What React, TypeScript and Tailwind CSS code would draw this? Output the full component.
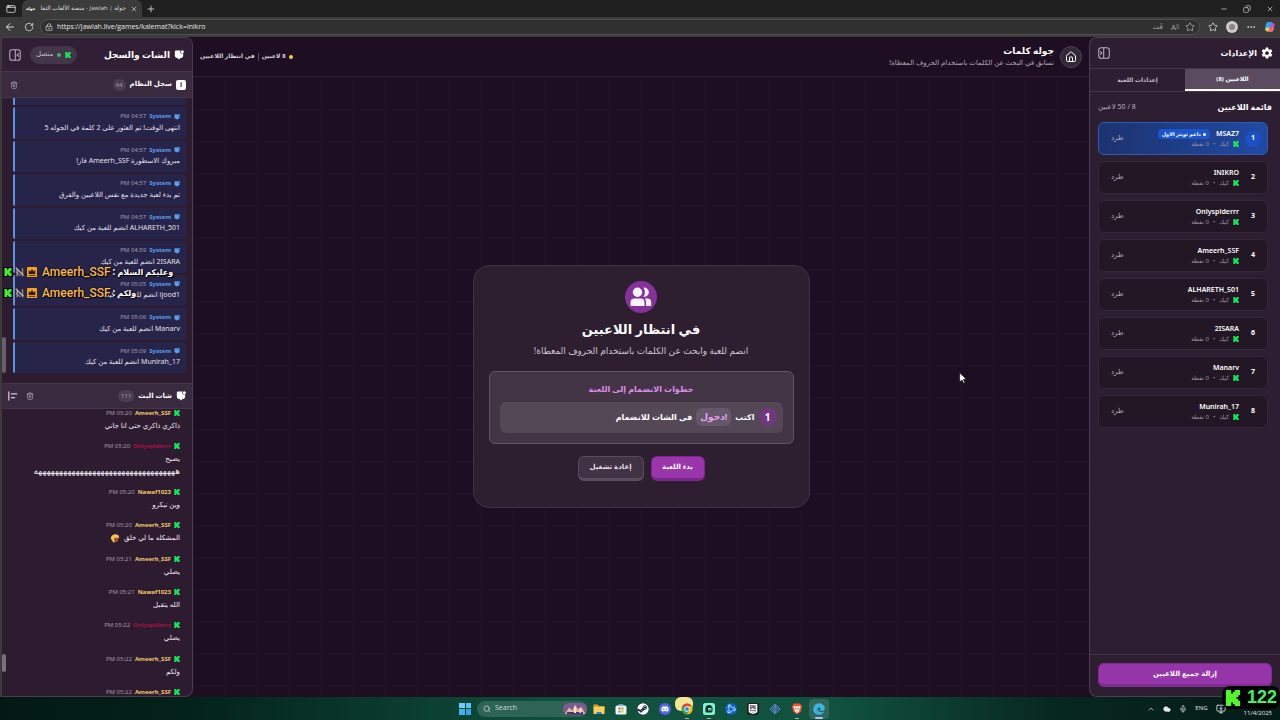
import type { ReactNode } from "react";
import {
  ArrowLeft, RotateCw, LockKeyhole, X, Plus, Minus, Copy, Star, Ellipsis, Trash2,
  Search, ChevronUp, Cloud, Mic, House, MonitorDown, AppWindow,
} from "lucide-react";
import { IoSettingsSharp } from "react-icons/io5";
import { FaSteam, FaDiscord, FaEdge } from "react-icons/fa";
import { SiEpicgames, SiBattledotnet } from "react-icons/si";

const KickIcon = ({ className = "size-1.5 text-[#12e85a]" }: { className?: string }) => (
  <svg viewBox="1 0 22 24" fill="currentColor" className={`shrink-0 ${className}`} aria-hidden="true">
    <path d="M1.333 0h8v5.333H12V2.667h2.667V0h8v8H20v2.667h-2.667v2.666H20V16h2.667v8h-8v-2.667H12v-2.666H9.333V24h-8Z" />
  </svg>
);

const ChatIcon = ({ className = "" }: { className?: string }) => (
  <svg viewBox="0 0 24 24" className={`shrink-0 ${className}`} aria-hidden="true">
    <path fill="currentColor" d="M5 1h11a4.200 4.200 0 0 0 6 6V14a5 5 0 0 1-5 5h-1.500L12 23l-3.500-4H7a5 5 0 0 1-5-5V4a3 3 0 0 1 3-3Z" />
    <circle cx="20" cy="4" r="3.600" fill="currentColor" />
  </svg>
);

const PanelIcon = ({ flip = false }: { flip?: boolean }) => (
  <svg viewBox="0 0 24 24" fill="none" stroke="currentColor" strokeWidth="1.800" strokeLinecap="round" className={flip ? "size-3.5 -scale-x-100" : "size-3.5"} aria-hidden="true">
    <path d="M7 3h10a4 4 0 0 1 4 4v10a4 4 0 0 1-4 4H7a4 4 0 0 1-4-4V7a4 4 0 0 1 4-4ZM12.500 3v18M18 9.500 15.500 12l2.500 2.500" />
  </svg>
);

const UsersIcon = () => (
  <svg viewBox="0 0 24 24" fill="#fbf4fc" className="size-6" aria-hidden="true">
    <circle cx="8.500" cy="7.200" r="4.700" />
    <path d="M14.300 2.700a4.600 4.600 0 1 1 0 9 7 7 0 0 0 0-9Z" />
    <path d="M5.500 13.500h6a4 4 0 0 1 4 4v3.500h-14v-3.500a4 4 0 0 1 4-4Z" />
    <path d="M15.800 13.500h2.400a4 4 0 0 1 4 4v3.500h-5.100v-3.700a5.500 5.500 0 0 0-1.300-3.800Z" />
  </svg>
);

const BroadcastMark = () => (
  <svg viewBox="0 0 24 24" className="size-2.5 shrink-0" aria-hidden="true">
    <path d="M5 22V4l13 16V3" stroke="#8e8878" strokeWidth="3.500" fill="none" />
    <path d="m2 3 19 16M4 12l8 9" stroke="#d6d0c0" strokeWidth="2" strokeLinecap="round" />
  </svg>
);

const CrownBadge = () => (
  <svg viewBox="0 0 24 24" className="size-2.5 shrink-0" aria-hidden="true">
    <rect width="24" height="24" rx="2" fill="#f6a11c" />
    <path d="m4 7 4 4 4-6 4 6 4-4v10H4Z" fill="#2d1c10" />
    <path d="M4 19h16v2H4z" fill="#2d1c10" />
  </svg>
);

type LogEntry = { time: string; text: string };
const logs: LogEntry[] = [
  { time: "04:57", text: "انتهى الوقت! تم العثور على 2 كلمة في الجوله 5" },
  { time: "04:57", text: "مبروك الاسطورة Ameerh_SSF فاز!" },
  { time: "04:57", text: "تم بدء لعبة جديدة مع نفس اللاعبين والفرق" },
  { time: "04:57", text: "ALHARETH_501 انضم للعبة من كيك" },
  { time: "04:59", text: "2ISARA انضم للعبة من كيك" },
  { time: "05:05", text: "ijood1 انضم للعبة من كيك" },
  { time: "05:06", text: "Manarv انضم للعبة من كيك" },
  { time: "05:09", text: "Munirah_17 انضم للعبة من كيك" },
];

type ChatEntry = { name: string; time: string; text?: string; laugh?: string; red?: boolean; emote?: boolean };
const chat: ChatEntry[] = [
  { name: "Ameerh_SSF", time: "05:20", text: "ذاكري ذاكري حتى انا جاني" },
  { name: "Onlyspiderrr", time: "05:20", text: "يصيح", laugh: "ههههههههههههههههههههههههههههههههههه", red: true },
  { name: "Nawaf1023", time: "05:20", text: "وين نيكرو" },
  { name: "Ameerh_SSF", time: "05:20", text: "المشكله ما لي خلق", emote: true },
  { name: "Ameerh_SSF", time: "05:21", text: "يصلي" },
  { name: "Nawaf1023", time: "05:21", text: "الله يتقبل" },
  { name: "Onlyspiderrr", time: "05:22", text: "يصلي", red: true },
  { name: "Ameerh_SSF", time: "05:22", text: "ولكم" },
  { name: "Ameerh_SSF", time: "05:22" },
];

const players = ["MSAZ7", "INIKRO", "Onlyspiderrr", "Ameerh_SSF", "ALHARETH_501", "2ISARA", "Manarv", "Munirah_17"];

function BrowserChrome() {
  return (
    <header className="shrink-0 bg-[#1f1f1f] font-['Open_Sans','DejaVu_Sans',sans-serif] text-[#d9d9d9]">
      <div className="flex h-[17px] items-center">
        <AppWindow className="ml-1.5 size-2.5" />
        <div className="ml-1.5 flex h-full w-[120px] items-center gap-1 rounded-t-md bg-[#3b3b3b] px-1">
          <span className="text-[4px] font-bold text-white">جولة</span>
          <span dir="rtl" className="flex-1 text-[6px] whitespace-nowrap">جولة | Jawlah - منصة الألعاب التفا</span>
          <button aria-label="Close tab"><X className="size-2" /></button>
        </div>
        <button aria-label="New tab" className="ml-1"><Plus className="size-2.5" /></button>
        <div className="ml-auto flex items-center gap-[15px] pr-1.5">
          <button aria-label="Minimize"><Minus className="size-2" /></button>
          <button aria-label="Restore"><Copy className="size-2 -scale-x-100" /></button>
          <button aria-label="Close"><X className="size-2" /></button>
        </div>
      </div>
      <div className="flex h-5 items-center gap-2 bg-[#3b3b3b] px-1">
        <button aria-label="Back"><ArrowLeft className="size-3" /></button>
        <button aria-label="Reload"><RotateCw className="size-2.5" /></button>
        <div className="-ml-0.5 flex h-4 flex-1 items-center gap-1 rounded-full border border-[#505050] bg-[#303030] px-1">
          <LockKeyhole className="size-2" />
          <input aria-label="Address" readOnly value="https://jawlah.live/games/kalemat?kick=inikro" className="min-w-0 flex-1 bg-transparent text-[7px] text-[#e6e6e6] outline-none" />
          <span className="mr-1 text-[7px] text-[#a8a8a8]">قَت</span>
          <span className="mr-0.5 text-[8px] text-[#a8a8a8]">A<sup className="text-[5px]">))</sup></span>
          <Star className="size-2.5 text-[#a8a8a8]" />
        </div>
        <Star className="size-2.5" />
        <span className="grid size-3 place-items-center rounded-full bg-[#cfcac9]"><span className="size-1.5 rounded-full bg-[#8d8583]" /></span>
        <Ellipsis className="size-2.5" />
        <svg viewBox="0 0 24 24" className="size-3" aria-hidden="true">
          <path d="M8 2h8l-5 18H6a4 4 0 0 1-4-5l2-9a5 5 0 0 1 4-4Z" fill="#2aa7f0" />
          <path d="M4 13h9l-2 8H7a4 4 0 0 1-4-5Z" fill="#e5cf3e" />
          <path d="M14 4h3a4 4 0 0 1 4 5l-2 9a5 5 0 0 1-4 4H9Z" fill="#c253d8" />
          <path d="M16 12h4l-1 6a5 5 0 0 1-4 4H9l4-5Z" fill="#f2665d" />
        </svg>
      </div>
    </header>
  );
}

function CountPill({ children }: { children: ReactNode }) {
  return <span className="rounded-full bg-[#4c3e51] px-[3px] text-[6px] leading-3 text-[#a499a8]">{children}</span>;
}

function ChatPanel() {
  return (
    <aside dir="rtl" className="flex w-[191px] shrink-0 flex-col overflow-hidden rounded-r-lg border border-l-0 border-[#4b3c50] bg-[#2d1c30]">
      <div className="flex h-[33px] shrink-0 items-center gap-1 bg-[#312035] pr-2 pl-1.5">
        <ChatIcon className="size-2.5 text-white" />
        <h2 className="text-[9px] font-bold text-white">الشات والسجل</h2>
        <span className="mr-auto ml-1 flex h-[18px] items-center gap-1 rounded-full bg-[#44364a] px-1.5 text-[7px] text-[#c6bdc9]">
          <KickIcon /><span className="size-1 rounded-full bg-[#3fb56a]" />متصل
        </span>
        <button aria-label="طي اللوحة" className="text-[#b9afbd]"><PanelIcon /></button>
      </div>
      <div className="flex h-[27px] shrink-0 items-center gap-1 border-y border-[#463749] bg-[#3a2a3f] pr-1.5 pl-2">
        <span className="grid size-2.5 place-items-center rounded-xs bg-white text-[7px] leading-none font-bold text-[#3a2a3f]">i</span>
        <h3 className="text-[7px] font-bold text-white">سجل النظام</h3>
        <CountPill>64</CountPill>
        <button aria-label="مسح السجل" className="mr-auto text-[#b9afbd]"><Trash2 className="size-2" /></button>
      </div>
      <div className="flex h-[285px] shrink-0 pb-2.5">
        <ul className="flex flex-1 flex-col gap-0.5 pr-1.5">
          <li className="h-[7px] border-l-2 border-[#5795e0] bg-[#27244a]" />
          {logs.map((l) => (
            <li key={l.text} className="flex flex-1 flex-col justify-center rounded-xs border-l-2 border-[#5795e0] bg-[#27244a] pr-1.5 whitespace-nowrap">
              <div className="flex h-2.5 items-center gap-[3px] text-[6px]">
                <ChatIcon className="size-1.5 text-[#5ba0ee]" />
                <b className="text-[#5ba0ee]">System</b>
                <time className="text-[#a09ab0]">{l.time} PM</time>
              </div>
              <p className="text-[7px] leading-3 text-[#e3e0ea]">{l.text}</p>
            </li>
          ))}
        </ul>
        <div className="flex w-[11px] flex-col items-end justify-end"><span className="h-9 w-1 rounded-full bg-[#6a5d6e]" /></div>
      </div>
      <div className="flex h-[26px] shrink-0 items-center gap-1 border-y border-[#463749] bg-[#3a2a3f] px-1.5">
        <ChatIcon className="size-2.5 text-white" />
        <h3 className="text-[7px] font-bold text-white">شات البث</h3>
        <CountPill>111</CountPill>
        <button aria-label="مسح الشات" className="mr-auto text-[#b9afbd]"><Trash2 className="size-2" /></button>
        <button aria-label="محاذاة" className="mr-1 text-[#d5ccd8]">
          <svg viewBox="0 0 24 24" className="size-2.5" stroke="currentColor" strokeWidth="3" aria-hidden="true"><path d="M2 1v22M7 7h15M7 16h10" /></svg>
        </button>
      </div>
      <div className="flex min-h-0 flex-1">
        <ul className="flex flex-1 flex-col justify-between pr-3">
          {chat.map((c, i) => (
            <li key={i} className="whitespace-nowrap">
              <div className="flex h-2 items-center gap-[3px] text-[6px] leading-2">
                <KickIcon />
                <b className={c.red ? "text-[#a5103f]" : "text-[#f5c86c]"}>{c.name}</b>
                <time className="text-[#a297a6]">{c.time} PM</time>
              </div>
              {c.text && (
                <p className="mt-[3px] flex items-center gap-1 text-[7px] leading-3 text-[#f0eaf2]">
                  {c.text}
                  {c.emote && (
                    <svg viewBox="0 0 24 24" className="size-2.5" aria-hidden="true">
                      <path d="M2 14C1 4 14-1 22 7l-2 7-6-3-4 6 5 4-7 2Z" fill="#f1c34a" />
                      <path d="M10 12h11l-3 9h-7Z" fill="#a64a28" />
                    </svg>
                  )}
                </p>
              )}
              {c.laugh && <p className="text-[9px] leading-3 text-[#f0eaf2]">{c.laugh}</p>}
            </li>
          ))}
        </ul>
        <div className="flex w-3 flex-col items-end justify-end pb-6"><span className="h-[18px] w-1 rounded-full bg-[#7b6f7f]" /></div>
      </div>
    </aside>
  );
}

function GameArea() {
  return (
    <main dir="rtl" className="flex min-w-0 flex-1 flex-col bg-[#1e0e21]">
      <div className="flex h-10 shrink-0 items-center border-b border-[#2c1b2f] px-[7px]">
        <a href="#home" aria-label="الرئيسية" className="grid size-[22px] place-items-center rounded-full border border-[#4e3f52] bg-[#35263a] text-white"><House className="size-3" /></a>
        <div className="mr-1.5">
          <h1 className="text-[9px] leading-3 font-bold text-white">جوله كلمات</h1>
          <p className="text-[7px] leading-3 text-[#b3a8b7]">تسابق في البحث عن الكلمات باستخدام الحروف المعطاة!</p>
        </div>
        <div className="mr-auto flex items-center gap-[3px] text-[6px] font-bold text-[#d8cfdb]">
          <span className="size-1 rounded-full bg-[#f5d52c]" />
          <span>8 لاعبين</span>
          <span className="h-2 w-px bg-[#5d4f61]" />
          <span>في انتظار اللاعبين</span>
        </div>
      </div>
      <div className="grid flex-1 place-items-center bg-[linear-gradient(to_right,#231128_1px,transparent_1px),linear-gradient(to_bottom,#231128_1px,transparent_1px)] bg-size-[32px_32px] pb-0.5">
        <section className="flex w-[337px] flex-col items-center rounded-2xl border border-[#423245] bg-[#2d1e30] px-[15px] pt-[15px] pb-[26px]">
          <div className="grid size-8 place-items-center rounded-full bg-[#86309a]"><UsersIcon /></div>
          <h2 className="mt-1 text-[13px] leading-6 font-bold text-white">في انتظار اللاعبين</h2>
          <p className="mt-0.5 text-[9px] leading-4 text-[#cdc5d0]">انضم للعبة وابحث عن الكلمات باستخدام الحروف المعطاة!</p>
          <div className="mt-3 w-full rounded-md border border-[#615364] bg-[#433446] p-2.5">
            <h3 className="text-center text-[8px] leading-[14px] font-bold text-[#dc8eea]">خطوات الانضمام إلى اللعبة</h3>
            <div className="mt-1.5 flex h-[31px] items-center gap-1 rounded-md bg-[#544857] px-1.5 text-[8px] font-bold text-white">
              <span className="grid size-[18px] place-items-center rounded-full bg-[#71377f] text-[10px]">1</span>
              اكتب
              <code className="rounded-md bg-[#65586a] px-1 font-['Noto_Sans','DejaVu_Sans',sans-serif] text-[9px] leading-[18px] font-bold text-[#e6a3f1]">!دخول</code>
              في الشات للانضمام
            </div>
          </div>
          <div className="mt-3 flex gap-[7px]">
            <button className="h-[25px] w-[54px] rounded-md border border-b-3 border-[#79278b] bg-[#9a35ac] text-[7px] font-bold text-white">بدء اللعبة</button>
            <button className="h-[25px] w-[66px] rounded-md border border-b-3 border-[#5a4b5e] bg-[#413244] text-[7px] font-bold text-[#e6dfe8]">إعادة تشغيل</button>
          </div>
        </section>
      </div>
    </main>
  );
}

function PlayersPanel() {
  return (
    <aside dir="rtl" className="flex w-[191px] shrink-0 flex-col rounded-l-lg border border-r-0 border-[#4b3c50] bg-[#2e1e31]">
      <div className="flex h-[30px] shrink-0 items-center gap-1 px-[7px]">
        <IoSettingsSharp className="size-3 text-white" />
        <h2 className="text-[8px] font-bold text-white">الإعدادات</h2>
        <button aria-label="طي الإعدادات" className="mr-auto text-[#b9afbd]"><PanelIcon flip /></button>
      </div>
      <div className="flex h-6 shrink-0 border-y border-[#463749] text-[6px] font-bold">
        <button className="flex-1 border-b-2 border-white bg-[#5a4c5e] text-white">اللاعبين (8)</button>
        <button className="flex-1 text-[#c3bac6]">إعدادات اللعبة</button>
      </div>
      <div className="flex h-[30px] shrink-0 items-center justify-between px-2">
        <h3 className="text-[8px] font-bold text-white">قائمة اللاعبين</h3>
        <span className="text-[7px] text-[#b9afbd]">8 / 50 لاعبين</span>
      </div>
      <ol className="flex flex-col gap-1.5 pr-3 pl-2">
        {players.map((name, i) => (
          <li key={name} className={i === 0
            ? "flex h-[33px] items-center rounded-md border border-[#2c5cb8] bg-linear-to-l from-[#204aa3] to-[#1d3370] px-1.5"
            : "flex h-[33px] items-center rounded-md border border-[#35263a] bg-[#231726] px-1.5"}>
            <span className={i === 0
              ? "grid size-4 place-items-center rounded-full bg-[#1c50c4] text-[7px] font-bold text-white"
              : "grid size-4 place-items-center text-[7px] font-bold text-white"}>{i + 1}</span>
            <div className="mr-1.5 pt-px whitespace-nowrap">
              <div className="flex h-2.5 items-center gap-1.5 text-[7px] font-semibold text-white">
                {name}
                {i === 0 && <span className="flex items-center gap-0.5 rounded-sm bg-[#1c55cd] px-1 text-[5px] leading-2.5 font-bold"><span className="size-[3px] rounded-full bg-white" />داعم تويتر الاول</span>}
              </div>
              <div className="flex h-2.5 items-center gap-1 text-[6px] text-[#9c919f]">
                <KickIcon /><span>كيك</span><span>•</span><span>0 نقطة</span>
              </div>
            </div>
            <button className="mr-auto px-1.5 text-[7px] text-[#bcb2c0]">طرد</button>
          </li>
        ))}
      </ol>
      <div className="mt-auto border-t border-[#433446] px-2 pt-2 pb-[9px]">
        <button className="block h-6 w-full rounded-md border border-b-3 border-[#7f2b91] bg-[#9635a9] text-[7px] font-bold text-white">إزالة جميع اللاعبين</button>
      </div>
    </aside>
  );
}

function Taskbar() {
  return (
    <footer className="grid h-[23px] shrink-0 grid-cols-[1fr_auto_1fr] items-center bg-[linear-gradient(to_right,#031914,#03221a_15%,#0a3a2c_30%,#11513e_45%,#11523f_65%,#07281f_82%,#031b17)] font-['Open_Sans',sans-serif] text-[#e3e8e6]">
      <span />
      <div className="flex items-center gap-2.5 pl-1">
        <button aria-label="Start" className="grid size-3 grid-cols-2 gap-px"><i className="bg-[#6ad0fb]" /><i className="bg-[#58c3f8]" /><i className="bg-[#3fb0f2]" /><i className="bg-[#32a5ee]" /></button>
        <label className="-mx-1 flex h-4 w-[110px] items-center gap-1 rounded-full bg-[#2d6454] pl-1.5">
          <Search className="size-2" />
          <input aria-label="Search" placeholder="Search" className="w-0 flex-1 bg-transparent text-[7px] outline-none placeholder:text-[#d2dcd8]" />
          <svg viewBox="0 0 48 24" className="h-3 w-6" aria-hidden="true">
            <rect width="48" height="24" rx="11" fill="#7a5b93" /><path d="M4 22 12 9l7 6 5-12 6 10 7-5 8 14Z" fill="#e9b7a0" /><path d="M8 18h32v5H8Z" fill="#4a3566" /><path d="M22 8h4v12h-4zM33 10h3v10h-3z" fill="#f7e4d2" />
          </svg>
        </label>
        <svg viewBox="0 0 24 24" className="size-3" aria-label="Files"><path d="M1 3h8l3 3h11v6H1Z" fill="#e0a32b" /><path d="M1 8h22v14H1Z" fill="#fbcf56" /><path d="M7 18h10v4H7Z" fill="#2e80d0" /></svg>
        <svg viewBox="0 0 24 24" className="size-3" aria-label="Store"><path d="M8 6V3h8v3" fill="none" stroke="#4db5ee" strokeWidth="2" /><rect x="1" y="5" width="22" height="18" rx="3" fill="#f2f5f8" /><path d="M7 9h4v4H7z" fill="#ee5427" /><path d="M13 9h4v4h-4z" fill="#7cb82f" /><path d="M7 15h4v4H7z" fill="#2aa4e8" /><path d="M13 15h4v4h-4z" fill="#f8b91d" /></svg>
        <FaSteam className="size-3 rounded-full bg-[#12284d] text-white" />
        <span className="grid size-3 place-items-center rounded-full bg-[#5663ea]"><FaDiscord className="size-2 text-white" /></span>
        <span className="relative size-3">
          <span className="absolute -top-1.5 -left-1.5 h-3.5 w-[18px] rounded-md bg-[#f5e595]" />
          <svg viewBox="0 0 24 24" className="relative size-3" aria-label="Chrome">
            <circle cx="12" cy="12" r="11" fill="#34a853" /><path d="M12 12 2.500 6.500A11 11 0 0 1 21.500 6.500H12Z" fill="#ea4335" /><path d="M12 12V6.500h9.500A11 11 0 0 1 12 23l5-8Z" fill="#fbbc05" /><circle cx="12" cy="12" r="5.500" fill="#fff" /><circle cx="12" cy="12" r="4.200" fill="#4285f4" />
          </svg>
          <i className="absolute -bottom-1 left-1 h-px w-1 bg-[#a9b5b0]" />
        </span>
        <span className="relative size-3">
          <svg viewBox="0 0 24 24" className="size-3" aria-label="Streamer"><rect width="24" height="24" rx="5" fill="#80f5d2" /><path d="M5 18v-7a7 7 0 0 1 14 0v5a3 3 0 0 1-3 3H6Z" fill="#122b2b" /><path d="M10 10h7v5h-7Z" fill="#80f5d2" /><path d="M11.500 12h1.500v1.500h-1.500zM14 12h1.500v1.500H14z" fill="#122b2b" /></svg>
          <i className="absolute -bottom-1 left-1 h-px w-1 bg-[#a9b5b0]" />
        </span>
        <span className="grid size-3 place-items-center rounded-full bg-[#1161c8]"><SiBattledotnet className="size-2.5 text-[#a4dcff]" /></span>
        <span className="grid size-3 place-items-center rounded-xs bg-[#202020]"><SiEpicgames className="size-2.5 text-white" /></span>
        <svg viewBox="0 0 24 24" className="size-3" fill="none" stroke="#6c9bd2" strokeWidth="2" aria-label="Launcher"><path d="m12 3 10 9-10 9L2 12Z" fill="#173b66" /><path d="m12 7 5 5-5 5-5-5ZM12 3v18" /></svg>
        <span className="relative size-3">
          <svg viewBox="0 0 24 24" className="size-3" aria-label="Brave"><path d="M6 1h12l4 5-2 11-8 6-8-6L2 6Z" fill="#f4512c" /><path d="m6 6 6 1 6-1 1 3-3 5 1 2-5 4-5-4 1-2-3-5Z" fill="#fff" /><path d="m8 9 3 1v4l-2-1ZM16 9l-3 1v4l2-1ZM10 16h4l-2 1.500Z" fill="#f4512c" /></svg>
          <i className="absolute -bottom-1 left-1 h-px w-1 bg-[#a9b5b0]" />
        </span>
        <span className="relative -mx-1 grid h-5 w-5 place-items-center rounded-sm bg-[#33665a]"><FaEdge className="size-3 text-[#38b6e6]" /><i className="absolute bottom-0 h-0.5 w-2 rounded-full bg-[#b9c3e3]" /></span>
      </div>
      <div className="flex items-center justify-end gap-2 pr-2 text-[6px]">
        <ChevronUp className="size-2" /><Cloud className="size-2" fill="currentColor" /><Mic className="size-2" /><span>ENG</span><MonitorDown className="size-2.5" />
        <time className="ml-2.5 self-end pt-2 leading-3">11/4/2025</time>
      </div>
    </footer>
  );
}

function StreamLine({ text }: { text: string }) {
  return (
    <p className="flex h-[21px] items-center gap-0.5 whitespace-nowrap [text-shadow:0_0_2px_#000,1px_1px_1px_#000]">
      <span className="grid size-2.5 place-items-center bg-black"><KickIcon className="size-2 text-[#3cf321]" /></span>
      <BroadcastMark />
      <CrownBadge />
      <b className="ml-[3px] font-['Roboto',sans-serif] text-[12px] font-medium text-[#fbb951]">Ameerh_SSF</b>
      <b className="text-[10px] text-white">:</b>
      <b dir="rtl" className="text-[8px] text-white">{text}</b>
    </p>
  );
}

export default function App() {
  return (
    <div className="relative flex h-screen flex-col overflow-hidden bg-[#3b3b3b] font-['Noto_Sans','DejaVu_Sans',sans-serif]">
      <BrowserChrome />
      <div className="flex min-h-0 flex-1 bg-[#1e0e21]">
        <span className="w-0.5 bg-[#3b3b3b]" />
        <ChatPanel />
        <GameArea />
        <PlayersPanel />
      </div>
      <Taskbar />
      <div className="absolute top-[261px] left-[3px]">
        <StreamLine text="وعليكم السلام" />
        <StreamLine text="ولكم" />
      </div>
      <svg viewBox="0 0 12 18" className="absolute top-[372px] left-[959px] h-3 w-2" aria-hidden="true"><path d="M1 1v14l3.500-3 2.500 5 2-1-2.500-5H11Z" fill="#fff" stroke="#111" /></svg>
      <div className="absolute right-0 bottom-[11px] flex h-[23px] items-center gap-1.5 rounded-lg bg-black px-[3px] font-['Liberation_Sans',sans-serif] text-[18px] font-bold text-[#3df56b]">
        <KickIcon className="size-4 text-[#54f52a]" />122
      </div>
    </div>
  );
}
